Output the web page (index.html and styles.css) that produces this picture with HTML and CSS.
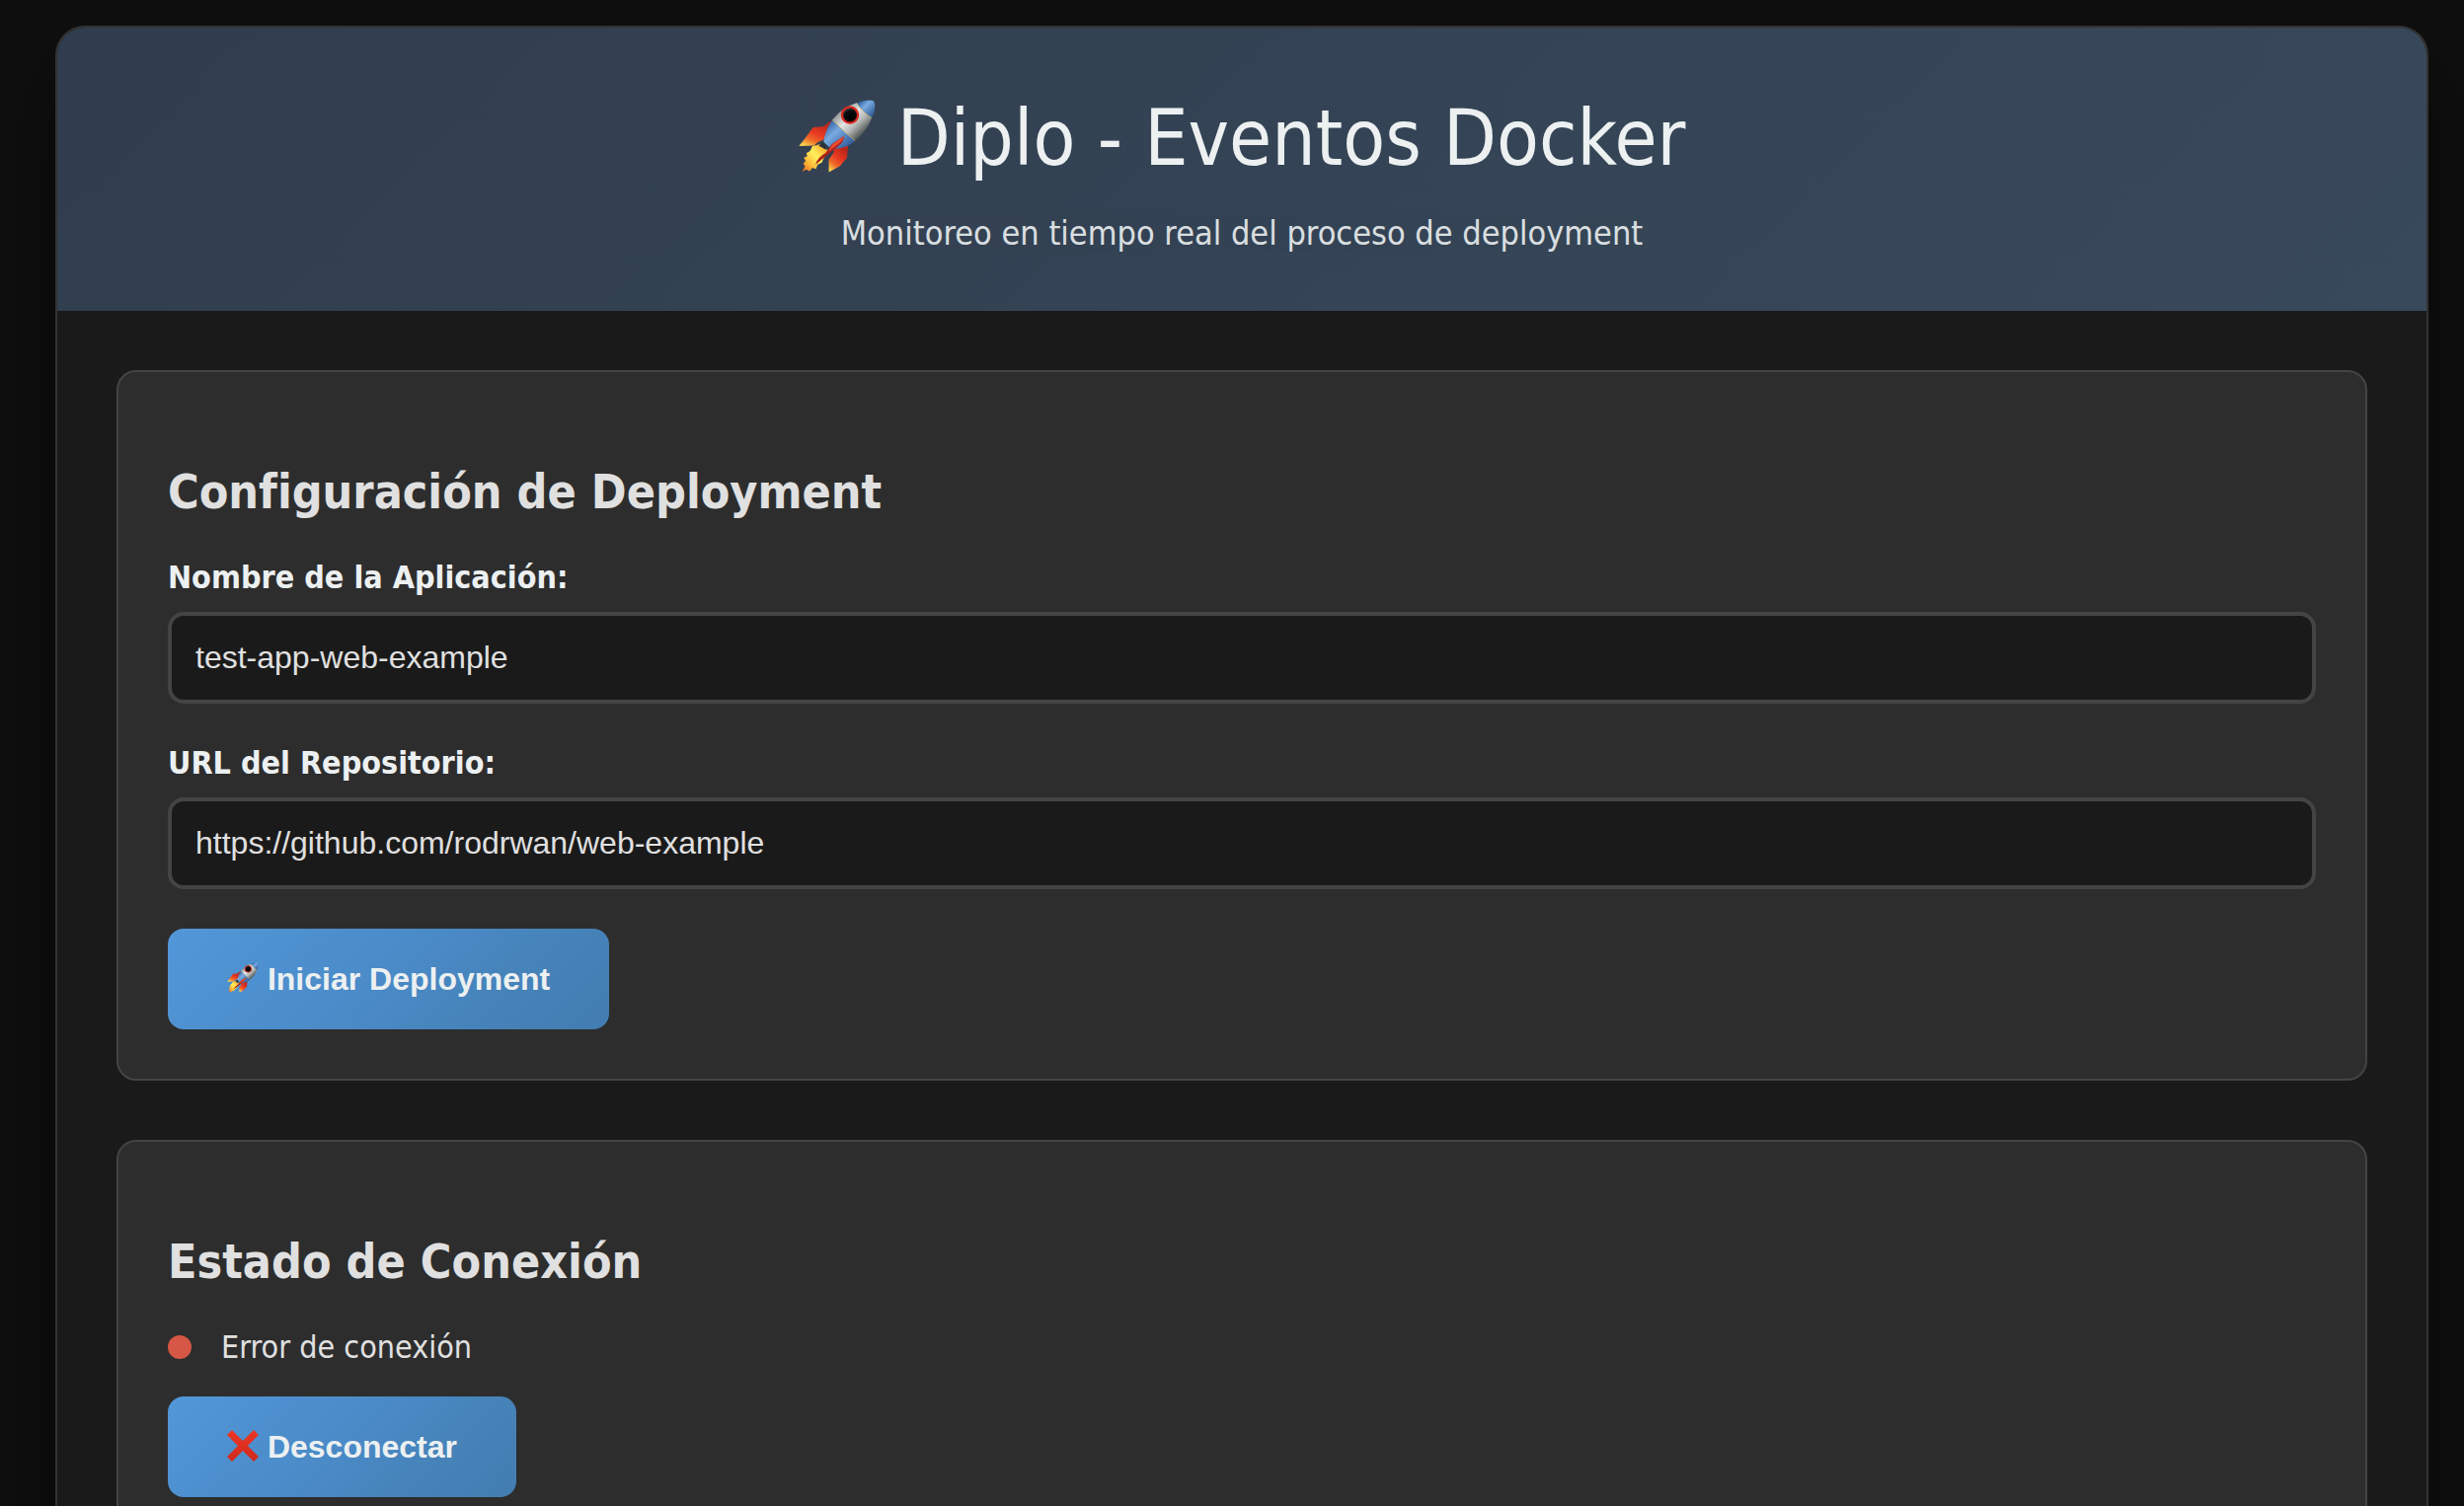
FILE: index.html
```html
<!DOCTYPE html>
<html lang="es">
<head>
<meta charset="utf-8">
<meta name="viewport" content="width=device-width, initial-scale=1">
<title>Diplo - Eventos Docker</title>
<link rel="stylesheet" href="styles.css">
</head>
<body>
<svg class="sprite" aria-hidden="true">
  <defs>
    <linearGradient id="hull" x1="0" y1="0" x2="1" y2="1">
      <stop offset="0.2" stop-color="#8d9192"/><stop offset="0.42" stop-color="#e4e6e4"/>
      <stop offset="0.58" stop-color="#b9bcba"/><stop offset="0.8" stop-color="#4d5350"/>
    </linearGradient>
    <linearGradient id="blue" x1="0" y1="0" x2="1" y2="1">
      <stop offset="0.1" stop-color="#2c5c9c"/><stop offset="0.4" stop-color="#79aae0"/>
      <stop offset="1" stop-color="#1d4687"/>
    </linearGradient>
    <linearGradient id="fin" x1="0.8" y1="0" x2="0.2" y2="1">
      <stop offset="0.1" stop-color="#b92519"/><stop offset="0.5" stop-color="#e83a22"/>
      <stop offset="0.75" stop-color="#ef6a2a"/><stop offset="1" stop-color="#fbd44c"/>
    </linearGradient>
    <linearGradient id="flame" x1="1" y1="0" x2="0" y2="1">
      <stop offset="0.1" stop-color="#f9a92c"/><stop offset="0.45" stop-color="#fff15a"/>
      <stop offset="0.75" stop-color="#fbb033"/><stop offset="1" stop-color="#ea5a20"/>
    </linearGradient>
    <radialGradient id="glass" cx="0.6" cy="0.7" r="0.7">
      <stop offset="0" stop-color="#000"/><stop offset="0.7" stop-color="#0b0d10"/><stop offset="1" stop-color="#4b5054"/>
    </radialGradient>
    <symbol id="rocket" viewBox="0 0 240 240">
      <path fill="url(#flame)" d="M66 142 43 148 36 163 24 170 27 179 16 184 22 194 14 202 20 211 11 228 24 221 34 226 43 215 54 219 59 206 72 199 91 161z"/>
      <path fill="url(#fin)" d="M106 66 99 91 78 128 59 136 48 146 1 148 21 122 45 89 76 87z"/>
      <path fill="url(#fin)" d="M154 145 151 184 128 211 94 229 94 190 111 165 107 157z"/>
      <path fill="url(#blue)" d="M105 66 145 105 176 131C158 149 132 157 104 156L77 137Q82 98 105 66z"/>
      <path fill="url(#hull)" d="M105 66Q137 25 181 13 194 36 228 60 212 103 176 131L145 105z"/>
      <path fill="url(#blue)" d="M181 13Q208 1 233 6 245 24 228 60 196 39 181 13z"/>
      <path fill="none" stroke="#d8ba58" stroke-width="2" d="M105 66 145 105 176 131M181 13Q194 38 228 60"/>
      <circle cx="160" cy="51" r="25" fill="url(#glass)" stroke="#d9281f" stroke-width="7"/>
      <path fill="#2c343b" d="M77 134 88 145 85 159 63 147z"/>
      <path fill="#ad2118" d="M142 116Q141 136 121 150L52 206Q58 183 84 169L103 142z"/>
      <path fill="#ed4b2f" d="M142 116Q139 132 117 146L92 165 105 143z"/>
    </symbol>
    <linearGradient id="cross-red" x1="0" y1="0" x2="0" y2="1">
      <stop offset="0" stop-color="#ee3624"/><stop offset="1" stop-color="#cc2a1e"/>
    </linearGradient>
    <symbol id="cross" viewBox="0 0 32 32">
      <path fill="url(#cross-red)" d="M5 0 16 11 27 0 32 5 21 16 32 27 27 32 16 21 5 32 0 27 11 16 0 5z"/>
    </symbol>
  </defs>
</svg>
<main class="container">
  <header class="header">
    <h1 class="title"><svg class="emoji" role="img" aria-label="cohete"><use href="#rocket"/></svg> Diplo - Eventos Docker</h1>
    <p class="subtitle">Monitoreo en tiempo real del proceso de deployment</p>
  </header>
  <div class="content">
    <section class="card">
      <h2 class="card-title">Configuración de Deployment</h2>
      <form>
        <div class="form-group">
          <label class="label" for="app-name">Nombre de la Aplicación:</label>
          <input class="input" id="app-name" type="text" value="test-app-web-example">
        </div>
        <div class="form-group">
          <label class="label" for="repo-url">URL del Repositorio:</label>
          <input class="input" id="repo-url" type="text" value="https://github.com/rodrwan/web-example">
        </div>
        <button class="btn" type="button"><svg class="emoji" aria-hidden="true"><use href="#rocket"/></svg> Iniciar Deployment</button>
      </form>
    </section>
    <section class="card">
      <h2 class="card-title">Estado de Conexión</h2>
      <div class="status"><span class="status-dot"></span><span>Error de conexión</span></div>
      <button class="btn" type="button"><svg class="emoji" aria-hidden="true"><use href="#cross"/></svg> Desconectar</button>
    </section>
  </div>
</main>
</body>
</html>
```
FILE: styles.css
```css
* {
  box-sizing: border-box;
}

body {
  margin: 0;
  padding: 26px 36px 0 56px;
  height: 100vh;
  overflow: hidden;
  background: #0f0f0f;
  color: #e0e0e0;
  font-family: Tahoma, "DejaVu Sans Condensed", "DejaVu Sans", sans-serif;
  font-size: 32px;
  line-height: 40px;
}

.sprite {
  position: absolute;
  width: 0;
  height: 0;
}

.container {
  overflow: hidden;
  background: #1a1a1a;
  border: 2px solid #333;
  border-radius: 30px;
  box-shadow: 0 40px 80px rgba(0, 0, 0, 0.5);
}

.header {
  padding: 60px 60px 56px;
  background: linear-gradient(135deg, #303d4e, #38495b);
  color: #ecf0f1;
  text-align: center;
}

.title {
  margin: 0 0 21px;
  font-size: 78px;
  font-weight: 400;
  line-height: 104px;
}

.emoji {
  width: 1em;
  height: 1em;
  vertical-align: -0.14em;
}

.subtitle {
  margin: 0;
  font-size: 34px;
  line-height: 46px;
  opacity: 0.9;
}

.content {
  display: flex;
  flex-direction: column;
  gap: 60px;
  padding: 60px;
}

.card {
  padding: 50px;
  background: #2d2d2d;
  border: 2px solid #444;
  border-radius: 20px;
}

.card-title {
  margin: 41px 0 37px;
  font-size: 48px;
  line-height: 60px;
}

.form-group {
  margin-bottom: 40px;
}

.label {
  display: block;
  margin-bottom: 15px;
  color: #ecf0f1;
  font-weight: 700;
}

.input {
  display: block;
  width: 100%;
  height: 93px;
  padding: 24px;
  background: #1a1a1a;
  border: 4px solid #444;
  border-radius: 16px;
  color: #e0e0e0;
  font-family: Arial, "Liberation Sans", sans-serif;
  font-size: 32px;
}

.btn {
  display: block;
  padding: 32px 60px;
  background: linear-gradient(135deg, #5297d8, #4a8ac7 50%, #4684bb 70%, #437db1);
  border: 0;
  border-radius: 16px;
  color: #ecf0f1;
  font-family: Arial, "Liberation Sans", sans-serif;
  font-size: 32px;
  font-weight: 700;
  line-height: 38px;
}

.status {
  display: flex;
  align-items: center;
  gap: 30px;
  margin-bottom: 30px;
}

.status-dot {
  width: 24px;
  height: 24px;
  background: #d65745;
  border-radius: 50%;
}
```
